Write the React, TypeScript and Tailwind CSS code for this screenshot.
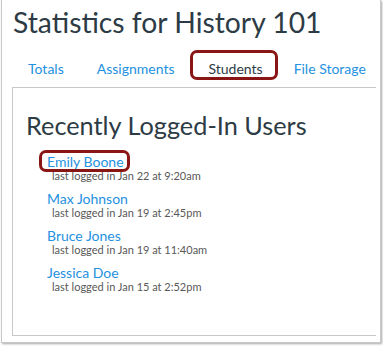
import React from 'react';

const users = [
  { name: 'Emily Boone', last: 'last logged in Jan 22 at 9:20am', marked: true },
  { name: 'Max Johnson', last: 'last logged in Jan 19 at 2:45pm' },
  { name: 'Bruce Jones', last: 'last logged in Jan 19 at 11:40am' },
  { name: 'Jessica Doe', last: 'last logged in Jan 15 at 2:52pm' },
];

export default function App() {
  return (
    <div className="w-[383px] h-[347px] bg-white overflow-hidden" style={{ fontFamily: 'Lato, "Open Sans", sans-serif' }}>
      <div className="ml-[1px] w-[380px] h-[343px] border-l border-r border-b border-[#c8c8c8] shadow-[1px_1px_2px_rgba(0,0,0,0.35)] pl-[10px] overflow-hidden">
        <h1 className="pl-[1px] pt-[4px] text-[28.3px] leading-[36px] text-[#2d3b45] font-normal whitespace-nowrap">
          Statistics for History 101
        </h1>

        {/* tabs */}
        <div className="mt-[10px] flex items-baseline pl-[16px] text-[14px] leading-[17px] whitespace-nowrap">
          <span className="text-[#2591e0]">Totals</span>
          <span className="ml-[33px] text-[#2591e0]">Assignments</span>
          <span className="ml-[16px] pt-[7px] pl-[15px] pr-[12px] border-[3px] border-[#8a1515] rounded-[7px] text-[#2d3b45]">
            Students
          </span>
          <span className="ml-[16px] text-[#2591e0]">File Storage</span>
        </div>

        <div className="mt-[7px] w-[364px] h-[249px] border-l border-t border-b border-[#c8c8c8] pl-[13px] pt-[22px]">
          <h2 className="text-[25.3px] leading-[30px] text-[#2d3b45] font-normal whitespace-nowrap">
            Recently Logged-In Users
          </h2>
          <ul className="mt-[14px] pl-[21px] flex flex-col gap-[9px]">
            {users.map((u) => (
              <li key={u.name} className="flex flex-col items-start">
                <span className="relative block text-[14px] leading-[16px] text-[#2591e0]">
                  {u.name}
                  {u.marked && (
                    <span className="absolute -left-[8px] -right-[6px] -top-[4px] -bottom-[2px] border-[3px] border-[#8a1515] rounded-[7px]" />
                  )}
                </span>
                <span className="block pl-[5px] text-[11px] leading-[12px] text-[#585858]">{u.last}</span>
              </li>
            ))}
          </ul>
        </div>
      </div>
    </div>
  );
}
